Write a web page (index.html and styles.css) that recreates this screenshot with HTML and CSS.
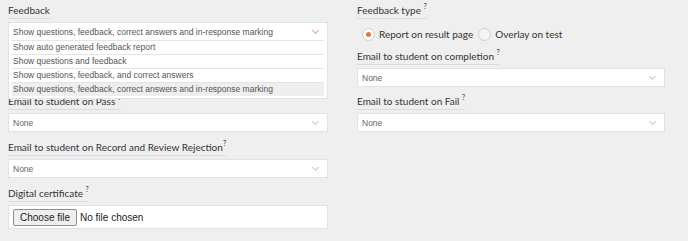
FILE: index.html
```html
<!DOCTYPE html>
<html lang="en">
<head>
    <meta charset="UTF-8">
    <title>Test Settings</title>
    <link rel="stylesheet" href="styles.css">
</head>
<body>

<div class="settings">
    <div class="column left">
        <div class="field field-feedback">
            <span class="field-label">Feedback</span>
            <div class="select open">
                <span class="select-value">Show questions, feedback, correct answers and in-response marking</span>
                <span class="chevron"></span>
                <ul class="select-list">
                    <li>Show auto generated feedback report</li>
                    <li>Show questions and feedback</li>
                    <li>Show questions, feedback, and correct answers</li>
                    <li class="active">Show questions, feedback, correct answers and in-response marking</li>
                </ul>
            </div>
        </div>

        <div class="field">
            <span class="field-label">Email to student on Pass <sup>?</sup></span>
            <div class="select"><span class="select-value">None</span><span class="chevron"></span></div>
        </div>

        <div class="field">
            <span class="field-label">Email to student on Record and Review Rejection<sup>?</sup></span>
            <div class="select"><span class="select-value">None</span><span class="chevron"></span></div>
        </div>

        <div class="field">
            <span class="field-label">Digital certificate <sup>?</sup></span>
            <div class="file-box">
                <span class="file-button">Choose file</span>
                <span class="file-name">No file chosen</span>
            </div>
        </div>
    </div>

    <div class="column right">
        <div class="field field-radios">
            <span class="field-label">Feedback type <sup>?</sup></span>
            <div class="radio-row">
                <span class="radio checked"></span><span class="radio-text">Report on result page</span>
                <span class="radio"></span><span class="radio-text">Overlay on test</span>
            </div>
        </div>

        <div class="field">
            <span class="field-label">Email to student on completion <sup>?</sup></span>
            <div class="select"><span class="select-value">None</span><span class="chevron"></span></div>
        </div>

        <div class="field">
            <span class="field-label">Email to student on Fail <sup>?</sup></span>
            <div class="select"><span class="select-value">None</span><span class="chevron"></span></div>
        </div>
    </div>
</div>

</body>
</html>
```

FILE: styles.css
```css
body {
    margin: 0;
    background: #efefef;
    font-family: Lato, "Liberation Sans", sans-serif;
    color: #333;
}

.settings {
    display: flex;
    gap: 29px;
    padding: 4px 0 0 8px;
}

.column.left {
    width: 320px;
}

.column.right {
    width: 308px;
}

.field {
    display: flex;
    flex-direction: column;
    align-items: flex-start;
    margin-bottom: 9px;
}

.column.right .field {
    margin-bottom: 8px;
}

.column.right .field-radios {
    margin-bottom: 6px;
}

.field-feedback {
    margin-bottom: 54px;
}

.field-label {
    font-size: 10px;
    line-height: 13px;
    padding-bottom: 1px;
    border-bottom: 1px solid #dcdcdc;
    margin-bottom: 3px;
}

.field-label sup {
    font-size: 7px;
    line-height: 0;
    vertical-align: 5px;
}

.select {
    position: relative;
    box-sizing: border-box;
    width: 100%;
    height: 19px;
    background: #fff;
    border: 1px solid #e2e2e2;
    font-family: "Liberation Sans", Arial, sans-serif;
    font-size: 8.5px;
    color: #666;
    display: flex;
    align-items: center;
    padding-left: 4px;
}

.chevron {
    position: absolute;
    right: 9px;
    top: 5px;
    width: 4px;
    height: 4px;
    border-right: 1px solid #c8c8c8;
    border-bottom: 1px solid #c8c8c8;
    transform: rotate(45deg);
}

.select.open .chevron {
    border-color: #e0a27c;
}

.select.open .select-value {
    color: #555;
}

.select-list {
    position: absolute;
    left: -1px;
    right: -1px;
    top: 17px;
    margin: 0;
    padding: 0 3px 2px 3px;
    list-style: none;
    background: #fff;
    border: 1px solid #e2e2e2;
    border-top: none;
}

.select-list li {
    height: 13px;
    line-height: 13px;
    padding-left: 1px;
    border-top: 1px solid #e4e4e4;
    color: #555;
}

.select-list li.active {
    background: #eeeeee;
}

.radio-row {
    display: flex;
    align-items: center;
    height: 20px;
    margin: 2px 0 0 5px;
    font-size: 10px;
}

.radio {
    box-sizing: border-box;
    width: 13px;
    height: 13px;
    border-radius: 50%;
    border: 1px solid #cfcfcf;
    background: #f4f4f4;
    position: relative;
}

.radio.checked {
    background: #fff;
}

.radio.checked::after {
    content: "";
    position: absolute;
    left: 3px;
    top: 3px;
    width: 5px;
    height: 5px;
    border-radius: 50%;
    background: #e8743b;
}

.radio-text {
    margin: 0 5px 0 4px;
}

.file-box {
    box-sizing: border-box;
    width: 100%;
    height: 24px;
    background: #fff;
    border: 1px solid #e2e2e2;
    display: flex;
    align-items: center;
    padding-left: 4px;
    font-family: "Liberation Sans", Arial, sans-serif;
    font-size: 10px;
    color: #222;
}

.file-button {
    background: #efefef;
    border: 1px solid #8f8f8f;
    border-radius: 2px;
    padding: 1px 6px;
    line-height: 13px;
    margin-right: 3px;
}
```
